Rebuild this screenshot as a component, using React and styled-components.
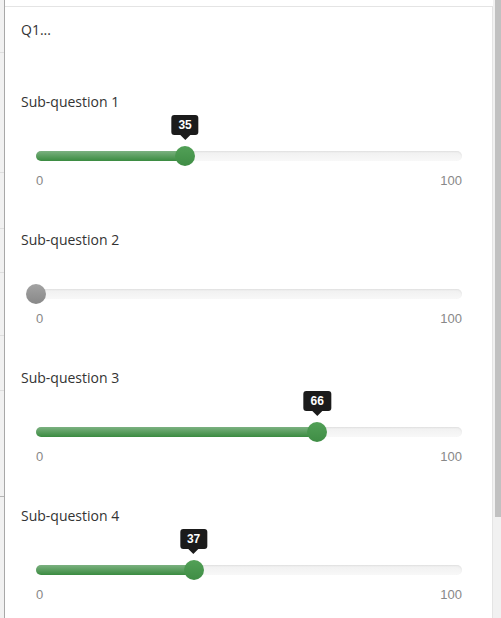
import React from "react";
import styled, { createGlobalStyle } from "styled-components";

const GlobalStyle = createGlobalStyle`
  html, body {
    margin: 0;
    padding: 0;
    background: #ffffff;
  }
  body {
    font-family: "Open Sans", "Liberation Sans", sans-serif;
  }
`;

const Page = styled.div`
  display: flex;
  height: 618px;
  overflow: hidden;
`;

const Backdrop = styled.div`
  width: 4px;
  flex: none;
  background: #f1f1f1;
  border-right: 1px solid #a8a8a8;
  display: flex;
  flex-direction: column;
`;

const BackdropRow = styled.div`
  flex: none;
  height: ${(p) => p.h}px;
  border-bottom: 1px solid ${(p) => (p.dark ? "#b5b5b5" : "#dedede")};
`;

const Scroller = styled.div`
  flex: 1;
  display: flex;
  background: #ffffff;
`;

const Panel = styled.div`
  flex: 1;
  margin-top: 6px;
  border-top: 1px solid #e4e4e4;
  border-right: 1px solid #e4e4e4;
  padding: 13px 15px 0 16px;
`;

const Track = styled.div`
  width: 8px;
  flex: none;
  background: #f1f1f1;
  display: flex;
  justify-content: flex-end;
`;

const Thumb = styled.div`
  width: 6px;
  height: 517px;
  background: #c1c1c1;
`;

const Title = styled.div`
  font-size: 14px;
  line-height: 20px;
  color: #333;
  margin-bottom: 52px;
`;

const Block = styled.div`
  margin-bottom: 41px;
`;

const Label = styled.div`
  font-size: 14px;
  line-height: 20px;
  color: #333;
`;

const SliderWrap = styled.div`
  padding: 0 15px;
  margin-top: 39px;
`;

const Rail = styled.div`
  position: relative;
  height: 10px;
  border-radius: 5px;
  background: linear-gradient(to bottom, #f0f0f0, #f8f8f8);
  box-shadow: inset 0 1px 2px rgba(0, 0, 0, 0.07);
`;

const Fill = styled.div`
  height: 10px;
  border-radius: 5px 0 0 5px;
  background: linear-gradient(to bottom, #7bb180, #3a8b40);
`;

const Handle = styled.div`
  position: absolute;
  top: -5px;
  width: 20px;
  height: 20px;
  margin-left: -10px;
  border-radius: 50%;
  background: ${(p) =>
    p.empty
      ? "linear-gradient(to bottom, #a3a3a3, #888888)"
      : "linear-gradient(to bottom, #52a057, #3f8d45)"};
`;

const Tip = styled.div`
  position: absolute;
  bottom: 26px;
  transform: translateX(-50%);
  background: #1b1b1b;
  color: #ffffff;
  font-family: "Liberation Sans", Arial, sans-serif;
  font-weight: bold;
  font-size: 12px;
  line-height: 20px;
  height: 20px;
  padding: 0 7px;
  border-radius: 3px;
  white-space: nowrap;

  &::after {
    content: "";
    position: absolute;
    left: 50%;
    top: 100%;
    margin-left: -5px;
    border-left: 5px solid transparent;
    border-right: 5px solid transparent;
    border-top: 5px solid #1b1b1b;
  }
`;

const Range = styled.div`
  display: flex;
  justify-content: space-between;
  margin-top: 12px;
  font-family: "Liberation Sans", Arial, sans-serif;
  font-size: 13px;
  line-height: 16px;
  color: #888;
`;

const questions = [
  { label: "Sub-question 1", value: 35 },
  { label: "Sub-question 2", value: null },
  { label: "Sub-question 3", value: 66 },
  { label: "Sub-question 4", value: 37 },
];

const Slider = ({ value }) => {
  const pos = value == null ? 0 : value;
  return (
    <SliderWrap>
      <Rail>
        {value != null && <Fill style={{ width: `${pos}%` }} />}
        <Handle empty={value == null} style={{ left: `${pos}%` }} />
        {value != null && <Tip style={{ left: `${pos}%` }}>{value}</Tip>}
      </Rail>
      <Range>
        <span>0</span>
        <span>100</span>
      </Range>
    </SliderWrap>
  );
};

export default function App() {
  return (
    <>
      <GlobalStyle />
      <Page>
        <Backdrop>
          <BackdropRow h={52} />
          <BackdropRow h={119} />
          <BackdropRow h={55} />
          <BackdropRow h={43} />
          <BackdropRow h={62} />
          <BackdropRow h={54} />
          <BackdropRow h={105} dark />
        </Backdrop>
        <Scroller>
          <Panel>
            <Title>Q1...</Title>
            {questions.map((q) => (
              <Block key={q.label}>
                <Label>{q.label}</Label>
                <Slider value={q.value} />
              </Block>
            ))}
          </Panel>
          <Track>
            <Thumb />
          </Track>
        </Scroller>
      </Page>
    </>
  );
}
